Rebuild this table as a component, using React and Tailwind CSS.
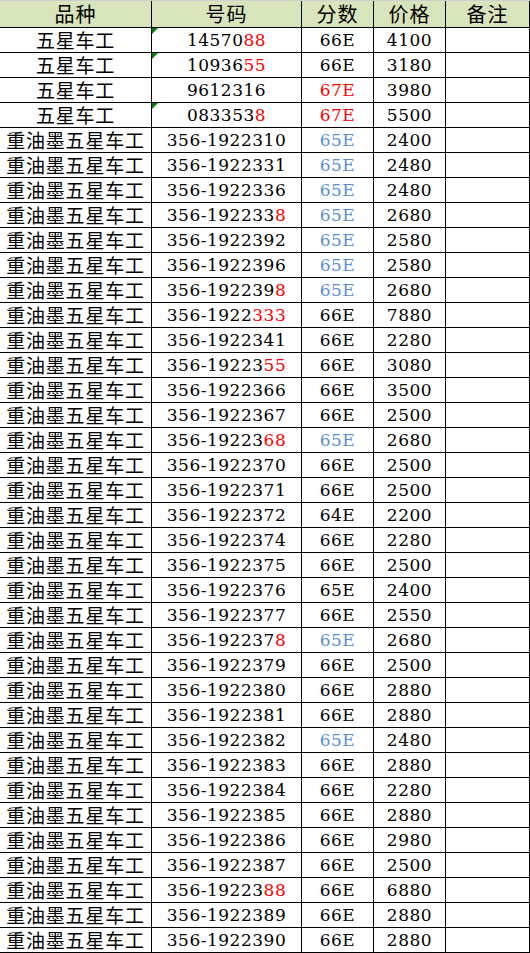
const RED = 'text-[#ff0000]';
const BLUE = 'text-[#5b8fd3]';

// [name, code, redTail, score, scoreColor, price, marker]
const rows = [
  ['五星车工', '1457088', 2, '66E', '', '4100', true],
  ['五星车工', '1093655', 2, '66E', '', '3180', true],
  ['五星车工', '9612316', 0, '67E', 'red', '3980', false],
  ['五星车工', '0833538', 1, '67E', 'red', '5500', true],
  ['重油墨五星车工', '356-1922310', 0, '65E', 'blue', '2400'],
  ['重油墨五星车工', '356-1922331', 0, '65E', 'blue', '2480'],
  ['重油墨五星车工', '356-1922336', 0, '65E', 'blue', '2480'],
  ['重油墨五星车工', '356-1922338', 1, '65E', 'blue', '2680'],
  ['重油墨五星车工', '356-1922392', 0, '65E', 'blue', '2580'],
  ['重油墨五星车工', '356-1922396', 0, '65E', 'blue', '2580'],
  ['重油墨五星车工', '356-1922398', 1, '65E', 'blue', '2680'],
  ['重油墨五星车工', '356-1922333', 3, '66E', '', '7880'],
  ['重油墨五星车工', '356-1922341', 0, '66E', '', '2280'],
  ['重油墨五星车工', '356-1922355', 2, '66E', '', '3080'],
  ['重油墨五星车工', '356-1922366', 0, '66E', '', '3500'],
  ['重油墨五星车工', '356-1922367', 0, '66E', '', '2500'],
  ['重油墨五星车工', '356-1922368', 2, '65E', 'blue', '2680'],
  ['重油墨五星车工', '356-1922370', 0, '66E', '', '2500'],
  ['重油墨五星车工', '356-1922371', 0, '66E', '', '2500'],
  ['重油墨五星车工', '356-1922372', 0, '64E', '', '2200'],
  ['重油墨五星车工', '356-1922374', 0, '66E', '', '2280'],
  ['重油墨五星车工', '356-1922375', 0, '66E', '', '2500'],
  ['重油墨五星车工', '356-1922376', 0, '65E', '', '2400'],
  ['重油墨五星车工', '356-1922377', 0, '66E', '', '2550'],
  ['重油墨五星车工', '356-1922378', 1, '65E', 'blue', '2680'],
  ['重油墨五星车工', '356-1922379', 0, '66E', '', '2500'],
  ['重油墨五星车工', '356-1922380', 0, '66E', '', '2880'],
  ['重油墨五星车工', '356-1922381', 0, '66E', '', '2880'],
  ['重油墨五星车工', '356-1922382', 0, '65E', 'blue', '2480'],
  ['重油墨五星车工', '356-1922383', 0, '66E', '', '2880'],
  ['重油墨五星车工', '356-1922384', 0, '66E', '', '2280'],
  ['重油墨五星车工', '356-1922385', 0, '66E', '', '2880'],
  ['重油墨五星车工', '356-1922386', 0, '66E', '', '2980'],
  ['重油墨五星车工', '356-1922387', 0, '66E', '', '2500'],
  ['重油墨五星车工', '356-1922388', 2, '66E', '', '6880'],
  ['重油墨五星车工', '356-1922389', 0, '66E', '', '2880'],
  ['重油墨五星车工', '356-1922390', 0, '66E', '', '2880'],
];

const cjk = "font-['Noto_Sans_CJK_SC',sans-serif]";
const num = "font-['DejaVu_Serif','Noto_Sans_CJK_SC',serif] text-[17px] leading-[20px] tracking-[0.5px]";

const Cell = ({ w, className = '', children }) => (
  <div className={`${w} relative flex items-center justify-center border-r border-black ${className}`}>
    {children}
  </div>
);

export default function App() {
  return (
    <div className="w-[530px] bg-white text-black">
      <div className={`flex h-[28px] border-t border-b border-t-[#d0d0d0] border-b-black bg-[#d8e4bc] text-[20px] leading-[22px] tracking-[1px] ${cjk}`}>
        <Cell w="w-[152px]">品种</Cell>
        <Cell w="w-[150px]">号码</Cell>
        <Cell w="w-[72px]">分数</Cell>
        <Cell w="w-[72px]">价格</Cell>
        <Cell w="w-[84px]">备注</Cell>
      </div>
      {rows.map(([name, code, tail, score, sc, price, marker], i) => {
        const head = tail ? code.slice(0, code.length - tail) : code;
        const end = tail ? code.slice(code.length - tail) : '';
        return (
          <div key={i} className="flex h-[25px] border-b border-black">
            <Cell w="w-[152px]" className={`text-[19px] leading-[20px] tracking-[0.8px] ${cjk}`}>{name}</Cell>
            <Cell w="w-[150px]" className={num}>
              {marker && (
                <span className="absolute left-0 top-0 h-0 w-0 border-t-[6px] border-r-[6px] border-t-[#008000] border-r-transparent" />
              )}
              <span>
                {head}
                {end && <span className={RED}>{end}</span>}
              </span>
            </Cell>
            <Cell w="w-[72px]" className={`${num} ${sc === 'red' ? RED : sc === 'blue' ? BLUE : ''}`}>{score}</Cell>
            <Cell w="w-[72px]" className={num}>{price}</Cell>
            <Cell w="w-[84px]" />
          </div>
        );
      })}
    </div>
  );
}
